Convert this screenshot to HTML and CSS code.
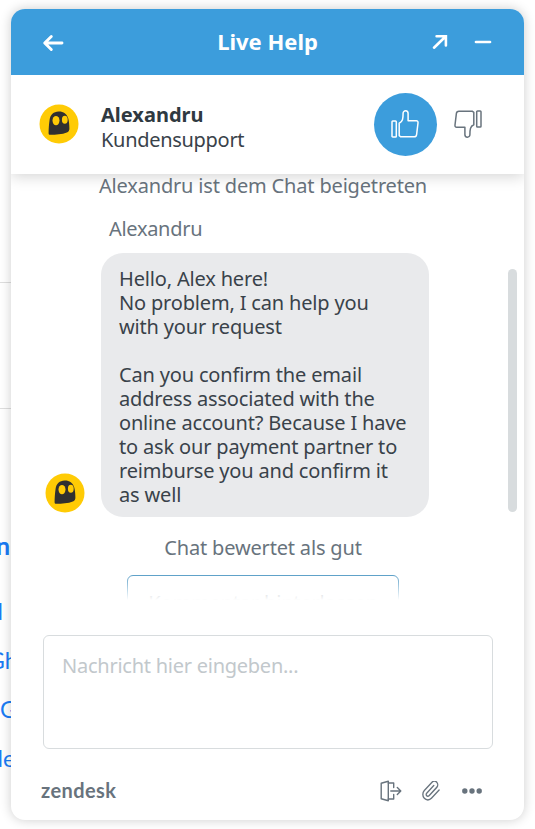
FILE: index.html
```
<!DOCTYPE html>
<html lang="de">
<head>
  <meta charset="UTF-8" />
  <meta name="viewport" content="width=device-width, initial-scale=1.0"/>
  <title>Live Help</title>
  <link rel="stylesheet" href="styles.css">
</head>
<body>
  <div class="page">
    <div class="page-row first"></div>
    <div class="page-row second"></div>
    <div class="page-links">
      <b class="link-title">n</b>
      <a class="link-one">d</a>
      <a class="link-two">Gh</a>
      <a class="link-three">G</a>
      <a class="link-four">de</a>
    </div>
  </div>

  <div class="widget">
    <header class="header">
      <svg class="back" width="22" height="18" viewBox="0 0 22 18">
        <path d="M9.300 2.500 2.700 9l6.600 6.500M3 9h17" fill="none" stroke="#fff" stroke-width="2.900" stroke-linecap="round" stroke-linejoin="round"/>
      </svg>
      <h1>Live Help</h1>
      <svg class="popout" width="16" height="16" viewBox="0 0 16 16">
        <path d="M2 13.700 13.300 2.700M4.600 2.200h9.300v9.300" fill="none" stroke="#fff" stroke-width="2.600" stroke-linecap="round"/>
      </svg>
      <svg class="minimize" width="18" height="4" viewBox="0 0 18 4">
        <path d="M2 2h14" stroke="#fff" stroke-width="2.700" stroke-linecap="round"/>
      </svg>
    </header>

    <div class="agent">
      <svg class="avatar" width="40" height="40" viewBox="0 0 40 40">
        <circle cx="20" cy="20" r="19.500" fill="#ffcb05"/>
        <path d="M9.600 29.300c0 1.100.6 1.500 1.500 1.500 6-.1 12-.4 16.700-2.300 1.800-.8 2.700-2.100 2.600-4.100-.1-3.600-.3-7-1.200-10.200C27.800 9.700 24.500 7.400 19.600 7.500c-5 .1-8.300 3.300-9 8.200-.7 4.600-1 9.300-1 13.600z" fill="#303030"/>
        <ellipse cx="17" cy="16.600" rx="3.500" ry="4.700" fill="#ffcb05"/>
        <ellipse cx="25.800" cy="15.700" rx="2.900" ry="4" fill="#ffcb05"/>
      </svg>
      <div class="agent-info">
        <div class="agent-name">Alexandru</div>
        <div class="agent-role">Kundensupport</div>
      </div>
      <div class="rate-good">
        <svg width="28" height="28" viewBox="0 0 28 28">
          <g fill="none" stroke="#fff" stroke-width="1.500" stroke-linejoin="round">
            <rect x="1" y="11" width="4.300" height="16" rx=".8"/>
            <path d="M8.200 13.200c3.500-1.500 3.900-4.100 3.900-9.900 0-3.300 5-3.300 5 .3v7.200h8.200c1.300 0 1.900.8 1.700 2.200l-1.400 11.600c-.2 1.500-1 2.200-2.500 2.200H9.800l-1.600-1.200z"/>
          </g>
        </svg>
      </div>
      <svg class="rate-bad" width="28" height="28" viewBox="0 0 28 28">
        <g fill="none" stroke="#68737d" stroke-width="1.500" stroke-linejoin="round">
          <rect x="22.700" y="1" width="4.300" height="16" rx=".8"/>
          <path d="M19.800 14.800c-3.500 1.500-3.900 4.100-3.900 9.900 0 3.300-5 3.300-5-.3v-7.200H2.700c-1.300 0-1.900-.8-1.700-2.200L2.400 3.400c.2-1.500 1-2.200 2.500-2.200h13.300l1.600 1.200z"/>
        </g>
      </svg>
    </div>

    <div class="log">
      <div class="event joined">Alexandru ist dem Chat beigetreten</div>
      <div class="sender">Alexandru</div>
      <div class="message">
        <svg class="avatar" width="40" height="40" viewBox="0 0 40 40">
          <circle cx="20" cy="20" r="19.500" fill="#ffcb05"/>
          <path d="M9.600 29.300c0 1.100.6 1.500 1.500 1.500 6-.1 12-.4 16.700-2.300 1.800-.8 2.700-2.100 2.600-4.100-.1-3.600-.3-7-1.200-10.200C27.800 9.700 24.500 7.400 19.600 7.500c-5 .1-8.300 3.300-9 8.200-.7 4.600-1 9.300-1 13.600z" fill="#303030"/>
          <ellipse cx="17" cy="16.600" rx="3.500" ry="4.700" fill="#ffcb05"/>
          <ellipse cx="25.800" cy="15.700" rx="2.900" ry="4" fill="#ffcb05"/>
        </svg>
        <div class="bubble">
          <p>Hello, Alex here!</p>
          <p>No problem, I can help you<br>with your request</p>
          <p class="paragraph">Can you confirm the email<br>address associated with the<br>online account? Because I have<br>to ask our payment partner to<br>reimburse you and confirm it<br>as well</p>
        </div>
      </div>
      <div class="event rated">Chat bewertet als gut</div>
      <div class="comment-button">Kommentar hinterlassen</div>
      <div class="scrollbar"></div>
    </div>

    <div class="input">Nachricht hier eingeben...</div>

    <footer class="footer">
      <div class="brand">zendesk</div>
      <svg class="leave" width="22" height="22" viewBox="0 0 22 22">
        <g fill="none" stroke="#68737d" stroke-width="1.400" stroke-linejoin="round" stroke-linecap="round">
          <path d="M8.300 1.300v19.400L1.200 18.800V3.200z"/>
          <path d="M8.300 3h5.400v4.500M8.300 19h5.400v-4.500M10.800 11h10M17.300 7.500l3.500 3.500-3.500 3.500"/>
        </g>
      </svg>
      <svg class="attach" width="18" height="20" viewBox="1 1.200 21.500 22" preserveAspectRatio="none">
        <path d="M21.440 11.050l-9.190 9.190a6 6 0 0 1-8.490-8.490l9.190-9.190a4 4 0 0 1 5.660 5.660l-9.200 9.190a2 2 0 0 1-2.830-2.830l8.490-8.480" fill="none" stroke="#68737d" stroke-width="1.600" stroke-linecap="round"/>
      </svg>
      <svg class="more" width="20" height="6" viewBox="0 0 20 6">
        <g fill="#68737d">
          <circle cx="2.800" cy="3" r="2.700"/>
          <circle cx="10" cy="3" r="2.700"/>
          <circle cx="17.200" cy="3" r="2.700"/>
        </g>
      </svg>
    </footer>
  </div>
</body>
</html>
```
FILE: styles.css
```
* {
  margin: 0;
  padding: 0;
  box-sizing: border-box;
}

body {
  display: grid;
  width: 535px;
  height: 829px;
  overflow: hidden;
  background: #fff;
  font-family: 'Segoe UI', 'Noto Sans', sans-serif;
  font-size: 20px;
  letter-spacing: -0.17px;
  line-height: 24px;
  color: #39424a;
}

/* page behind the widget */
.page {
  grid-area: 1 / 1;
  width: 11px;
  height: 829px;
  overflow: hidden;
  white-space: nowrap;
}

.page-row {
  border-bottom: 1px solid #dedede;
}

.first {
  height: 283px;
}

.second {
  height: 126px;
}

.page-links {
  display: flex;
  flex-direction: column;
  align-items: flex-start;
  gap: 24px;
  padding-top: 124px;
  font-family: Lato, sans-serif;
  font-size: 23px;
  letter-spacing: 0;
  line-height: 25px;
  color: #1a7cf5;
}

.link-title {
  margin: 0 0 17px -4px;
  font-size: 25px;
}

.link-one {
  margin-left: -10px;
}

.link-two {
  margin-left: -12px;
}

.link-four {
  margin-left: -10px;
}

.widget {
  grid-area: 1 / 1;
  display: flex;
  flex-direction: column;
  width: 513px;
  height: 811px;
  margin: 9px 0 0 11px;
  border-radius: 14px;
  overflow: hidden;
  background: #fff;
  box-shadow: 0 0 12px rgba(0, 0, 0, 0.2);
  z-index: 1;
}

.header {
  display: flex;
  align-items: center;
  height: 66px;
  padding: 0 32px 0 31px;
  background: #3c9ddc;
  z-index: 2;
}

.back {
  margin-top: 2px;
}

h1 {
  flex: 1;
  padding: 0 0 3px 39px;
  font-size: 22px;
  letter-spacing: 0;
  text-align: center;
  color: #fff;
}

.minimize {
  margin-left: 26px;
}

.agent {
  display: flex;
  align-items: center;
  height: 99px;
  padding: 0 42px 0 28px;
  box-shadow: 0 2px 14px rgba(0, 0, 0, 0.18);
  z-index: 1;
}

.agent .avatar {
  margin-bottom: 1px;
}

.agent-info {
  flex: 1;
  padding: 4px 0 0 22px;
  line-height: 25px;
}

.agent-name {
  font-weight: bold;
  letter-spacing: 0;
  color: #2f3941;
}

.agent-role {
  letter-spacing: -0.3px;
}

.rate-good {
  display: flex;
  justify-content: center;
  align-items: center;
  width: 63px;
  height: 63px;
  margin-right: 17px;
  border-radius: 50%;
  background: #3c9ddc;
}

.rate-good svg {
  margin: 0 1px 1px 0;
}

.rate-bad {
  margin-bottom: 1px;
}

.log {
  position: relative;
  height: 426px;
  overflow: hidden;
  white-space: nowrap;
}

.log::after {
  content: '';
  position: absolute;
  left: 0;
  right: 0;
  bottom: 0;
  height: 30px;
  background: linear-gradient(rgba(255, 255, 255, 0), #fff);
}

.event {
  padding-right: 9px;
  text-align: center;
  color: #68737d;
}

.sender {
  margin: 19px 0 12px 98px;
  letter-spacing: -0.3px;
  color: #68737d;
}

.message {
  display: flex;
  align-items: flex-end;
  gap: 16px;
  padding-left: 34px;
}

.message .avatar {
  margin-bottom: 4px;
}

.bubble {
  width: 328px;
  height: 264px;
  padding: 14px 18px;
  border-radius: 22px;
  background: #e9eaec;
}

.paragraph {
  margin-top: 24px;
}

.rated {
  margin: 19px 0 15px;
}

.comment-button {
  width: 272px;
  height: 60px;
  margin-left: 116px;
  padding-top: 15px;
  border: 1px solid #3c8dbd;
  border-radius: 6px;
  text-align: center;
  color: #68737d;
}

.scrollbar {
  position: absolute;
  top: 95px;
  right: 7px;
  width: 9px;
  height: 243px;
  border-radius: 5px;
  background: #d8dcde;
}

.input {
  height: 114px;
  margin: 35px 31px 0 32px;
  padding: 18px;
  border: 1px solid #d8dcde;
  border-radius: 6px;
  letter-spacing: -0.25px;
  color: #c2c8cc;
}

.footer {
  display: flex;
  align-items: center;
  height: 71px;
  padding: 12px 42px 0 30px;
}

.brand {
  flex: 1;
  padding-bottom: 2px;
  font-family: Lato, sans-serif;
  font-size: 20px;
  font-weight: bold;
  letter-spacing: 0.4px;
  color: #68737d;
}

.attach {
  margin: 0 22px 0 20px;
}
```
